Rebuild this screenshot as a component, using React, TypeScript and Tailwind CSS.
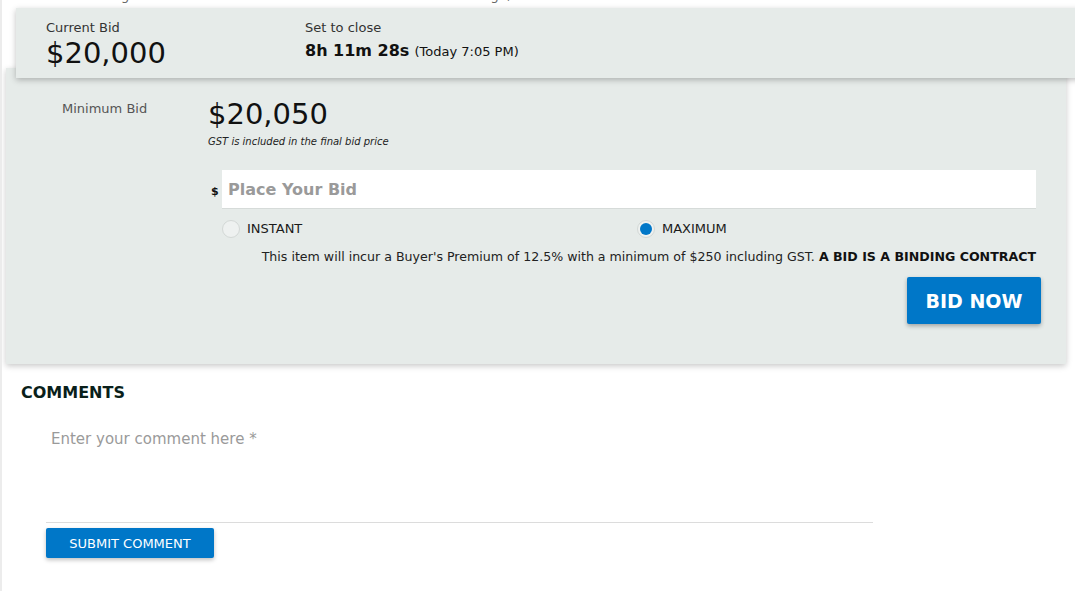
import { useState } from 'react';

const font = { fontFamily: '"DejaVu Sans", "Open Sans", sans-serif' };

function Radio({ checked, label, onClick }: { checked: boolean; label: string; onClick: () => void }) {
  return (
    <button type="button" onClick={onClick} className="flex items-center gap-[7px]">
      <span className="flex h-[18px] w-[18px] items-center justify-center rounded-full border border-[#d3d8d6] bg-[#eef1f0]">
        {checked && <span className="h-[12px] w-[12px] rounded-full bg-[#0077c8]" />}
      </span>
      <span className="text-[13px] text-[#1a1a1a]">{label}</span>
    </button>
  );
}

export default function App() {
  const [mode, setMode] = useState<'instant' | 'maximum'>('maximum');

  return (
    <div style={font} className="relative h-[591px] w-[1075px] overflow-hidden border-l-2 border-[#ececec] bg-white">
      {/* previous paragraph, mostly scrolled under the sticky header */}
      <div className="flex h-[8px] items-end overflow-hidden pl-[38px]">
        <p className="mb-[3px] whitespace-nowrap text-[13px] leading-[18px] text-[#666]">
          vehicle is in good overall condition with minor wear consistent with age, and will be sold as is where is
        </p>
      </div>

      {/* sticky header */}
      <div className="absolute left-[14px] right-[-20px] top-[8px] z-10 flex h-[70px] bg-[#e6ebe9] pl-[30px] pt-[12px] shadow-[0_2px_6px_rgba(0,0,0,0.25)]">
        <div className="w-[259px]">
          <div className="text-[13px] leading-[16px] text-[#333]">Current Bid</div>
          <div className="text-[29px] leading-[34px] text-[#111]">$20,000</div>
        </div>
        <div>
          <div className="text-[13px] leading-[16px] text-[#333]">Set to close</div>
          <div className="mt-[3px] text-[#111]">
            <span className="text-[16px] font-bold">8h 11m 28s</span>{' '}
            <span className="text-[13px]">(Today 7:05 PM)</span>
          </div>
        </div>
      </div>

      {/* bid panel */}
      <div className="ml-[4px] mt-[60px] w-[1060px] bg-[#e6ebe9] pb-[40px] pt-[29px] shadow-[0_2px_6px_rgba(0,0,0,0.22)]">
        <div className="flex">
          <div className="w-[202px] pl-[56px] pt-[2px] text-[13px] text-[#555]">Minimum Bid</div>
          <div className="flex-1 pr-[24px]">
            <div className="text-[29px] leading-[34px] text-[#111]">$20,050</div>
            <div className="mt-[3px] text-[10px] italic text-[#222]">GST is included in the final bid price</div>

            <div className="mt-[21px] flex items-end">
              <span className="mb-[9px] w-[14px] pl-[3px] text-[11px] font-bold text-[#111]">$</span>
              <input
                placeholder="Place Your Bid"
                className="h-[39px] w-[814px] border-b border-[#d6dbd9] bg-white px-[6px] text-[16px] font-bold text-[#333] outline-none placeholder:text-[#9a9a9a]"
              />
            </div>

            <div className="ml-[14px] mt-[10px] flex">
              <div className="w-[415px]">
                <Radio checked={mode === 'instant'} label="INSTANT" onClick={() => setMode('instant')} />
              </div>
              <Radio checked={mode === 'maximum'} label="MAXIMUM" onClick={() => setMode('maximum')} />
            </div>

            <p className="mt-[9px] w-[828px] text-right text-[12.6px] text-[#222]">
              This item will incur a Buyer's Premium of 12.5% with a minimum of $250 including GST.{' '}
              <span className="font-bold text-[#111]">A BID IS A BINDING CONTRACT</span>
            </p>

            <div className="flex w-[833px] justify-end">
              <button className="mt-[11px] h-[47px] w-[134px] rounded-[2px] bg-[#0077c8] text-[19px] font-bold text-white shadow-[0_2px_4px_rgba(0,0,0,0.3)]">
                BID NOW
              </button>
            </div>
          </div>
        </div>
      </div>

      {/* comments */}
      <div className="pl-[19px] pt-[19px]">
        <h2 className="text-[16px] font-bold leading-[20px] text-[#0a1f1a]">COMMENTS</h2>
        <div className="ml-[25px] mt-[26px] w-[827px]">
          <textarea
            placeholder="Enter your comment here *"
            className="block h-[94px] w-full resize-none border-b border-[#dcdcdc] px-[5px] text-[15px] leading-[20px] text-[#333] outline-none placeholder:text-[#9a9a9a]"
          />
          <button className="mt-[5px] h-[30px] w-[168px] rounded-[2px] bg-[#0077c8] text-[13px] text-white shadow-[0_2px_4px_rgba(0,0,0,0.25)]">
            SUBMIT COMMENT
          </button>
        </div>
      </div>
    </div>
  );
}
